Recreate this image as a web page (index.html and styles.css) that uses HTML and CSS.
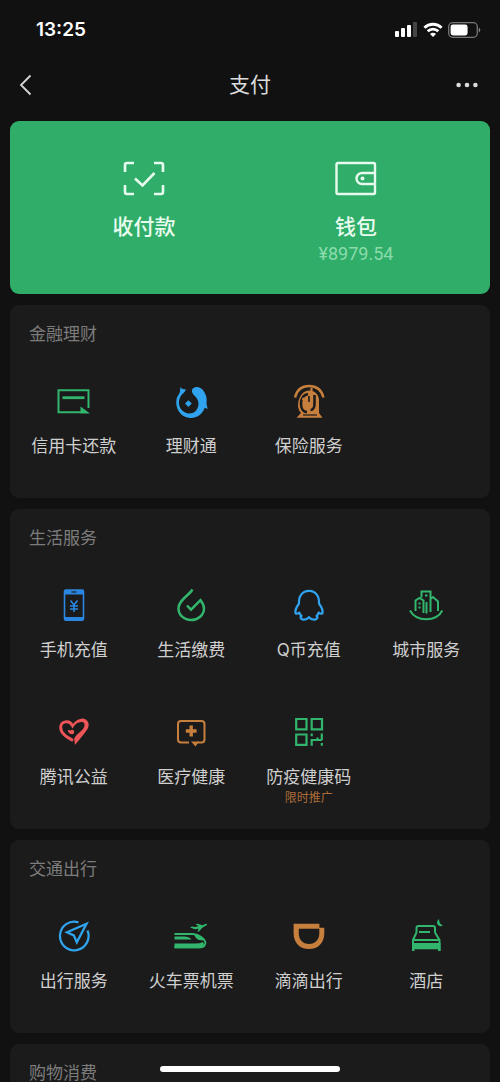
FILE: index.html
```html
<!DOCTYPE html>
<html lang="zh-CN">
<head>
<meta charset="utf-8">
<meta name="viewport" content="width=device-width, initial-scale=1">
<title>支付</title>
<link rel="stylesheet" href="styles.css">
</head>
<body>
<div class="app">
  <div class="status">
    <span class="time">13:25</span>
    <div class="indicators">
      <svg width="23" height="16" viewBox="0 0 23 16"><g fill="#fff"><rect x="0" y="9" width="4" height="6" rx="1"/><rect x="6" y="6" width="4" height="9" rx="1"/><rect x="12" y="3" width="4" height="12" rx="1"/></g><rect x="18" y="0" width="4" height="15" rx="1" fill="#444"/></svg>
      <svg width="20" height="16" viewBox="0 0 20 16"><g fill="none" stroke="#fff" stroke-width="2.8"><path d="M1.4 5.7a12.4 12.4 0 0 1 17.2 0"/><path d="M4.7 9.3a7.6 7.6 0 0 1 10.6 0"/></g><path d="M7 12q3-2.6 6 0l-3 3z" fill="#fff"/></svg>
      <svg width="33" height="16" viewBox="0 0 33 16"><rect x=".7" y=".7" width="28.6" height="14.6" rx="4" fill="none" stroke="#777" stroke-width="1.3"/><rect x="2.6" y="2.6" width="17" height="10.8" rx="2.4" fill="#fff"/><path d="M30.8 5.6q3 2.4 0 4.8z" fill="#888"/></svg>
    </div>
  </div>
  <header class="nav">
    <button class="nav-btn" type="button" aria-label="返回"><svg width="14" height="22" viewBox="0 0 14 22"><path d="M12.500 1.500 3 11l9.500 9.500" fill="none" stroke="#d6d6d6" stroke-width="1.8"/></svg></button>
    <h1>支付</h1>
    <button class="nav-btn nav-more" type="button" aria-label="更多"><svg width="22" height="6" viewBox="0 0 22 6" fill="#dcdcdc"><circle cx="2.600" cy="3" r="2.300"/><circle cx="11" cy="3" r="2.300"/><circle cx="19.400" cy="3" r="2.300"/></svg></button>
  </header>
  <main class="cards">
    <section class="hero">
      <a class="hero-item" href="#">
        <svg width="44" height="36" viewBox="0 0 44 36" fill="none" stroke="#e6fbee" stroke-width="2.600"><path d="M3 12V5q0-2 2-2h7M32 3h7q2 0 2 2v7M41 25v7q0 2-2 2h-7M12 34H5q-2 0-2-2v-7M13 18.500l7.500 7L32.500 13"/></svg>
        <span class="hero-label">收付款</span>
      </a>
      <a class="hero-item" href="#">
        <svg width="44" height="36" viewBox="0 0 44 36"><g fill="none" stroke="#e6fbee" stroke-width="2.400"><rect x="2.500" y="3" width="38.500" height="31" rx="1.500"/><path d="M41 13H28a5.500 5.500 0 0 0 0 11h13"/></g><circle cx="28.500" cy="18.500" r="2" fill="#e6fbee"/></svg>
        <span class="hero-label">钱包</span>
        <span class="balance">¥8979.54</span>
      </a>
    </section>

    <section class="card">
      <h2>金融理财</h2>
      <div class="grid">
        <a class="item" href="#">
          <svg class="icon green" viewBox="0 0 36 36"><path d="M32.500 24V6.300h-30v22H25" fill="none" stroke="currentColor" stroke-width="2"/><path d="M6.500 13.700h22" stroke="currentColor" stroke-width="2.800"/><path d="M24.500 22.500 34 29.500h-9.500z" fill="currentColor"/></svg>
          <span>信用卡还款</span>
        </a>
        <a class="item" href="#">
          <svg class="icon sky" viewBox="0 0 36 36" fill="currentColor"><path d="M7.500 3q1.500 3 5.500 2-1 3.500-4 5.500C5.500 14.500 5 20 7.500 24.500 12 31 20 31 23.500 26c3.500-5 2-10.500-1.200-13.500-2.800-2.500-4.500-5.500-2.500-8 3-3 8-1.500 10.500 2 2.800 3.800 4 8 3.200 13.500l1.200 5-3-1.200C29 31 23 34.500 17 34 7 33 2 24 3.500 15.500 4 12 7 9.500 7 7z"/><path d="m15.400 16.200 3.400 3.400-3.400 3.400-3.400-3.400z"/></svg>
          <span>理财通</span>
        </a>
        <a class="item" href="#">
          <svg class="icon orange" viewBox="0 0 36 36" fill="none" stroke="currentColor"><path d="M4 13.500C6 5.500 11 2 18 2s12.500 3.500 14.500 11.500" stroke-width="2.400"/><path d="M9 13Q12 6.500 18 6.500c6 0 9.500 4 10 9V29l3.500 4.700H5.500L10 29C6.500 25 6 19 9 13z" fill="currentColor" stroke="none"/><path d="M17 10c-5 1-7 5-7 10 0 4 2 8 6 8M23.500 11v9c0 4-2 6-4 6" stroke="#1b1b1b" stroke-width="2.600"/><path d="M12 31h14" stroke="#1b1b1b" stroke-width="1.200"/><path d="M20.500 4v17" stroke-width="2.200"/><path d="M18 12v6" stroke="#1b1b1b" stroke-width="1.600"/><circle cx="12.500" cy="15" r="1.500" fill="currentColor" stroke="none"/></svg>
          <span>保险服务</span>
        </a>
      </div>
    </section>

    <section class="card">
      <h2>生活服务</h2>
      <div class="grid">
        <a class="item" href="#">
          <svg class="icon blue" viewBox="0 0 36 36" fill="currentColor"><path fill-rule="evenodd" d="M10 1.200h16q2.300 0 2.300 2.300v27.200q0 2.300-2.300 2.300H10q-2.300 0-2.300-2.300V3.500q0-2.300 2.300-2.300zM9.300 6.500V29h17.400V6.500z"/><path d="M15.500 4h5" stroke="#1b1b1b" stroke-width="1.200"/><path d="M14.500 12.500 18 17l3.500-4.500M18 17v7M14 18h8M14 21h8" fill="none" stroke="currentColor" stroke-width="1.600"/></svg>
          <span>手机充值</span>
        </a>
        <a class="item" href="#">
          <svg class="icon green" viewBox="0 0 36 36" fill="none" stroke="currentColor" stroke-width="2.500"><path d="M19.500 1.500C15 8.500 5.500 12 5.500 20.500 5.500 27 11 32 18.200 32 25 32 31 27 31 20.500c0-3.500-1.300-5.500-3.500-8.300L18 21.700l-4-4.200"/></svg>
          <span>生活缴费</span>
        </a>
        <a class="item" href="#">
          <svg class="icon sky" viewBox="0 0 36 36" fill="none" stroke="currentColor" stroke-width="2.200" stroke-linejoin="round"><path d="M8 15.500C7.500 8 11.500 2.800 18 2.800S28.500 8 28 15.500c2.500 3.500 4.200 7 3.500 9.800-1.200.7-2.700.3-3.800-.8-.4 1.500-1.200 2.500-2.200 3.500 1.800 1.300 1 3-1.500 3.600-2.500.4-4.500-.6-6-2.400-1.500 1.800-3.500 2.800-6 2.400-2.500-.6-3.300-2.300-1.500-3.600-1-1-1.800-2-2.200-3.500-1.100 1.100-2.600 1.500-3.800.8-.7-2.800 1-6.300 3.500-9.800z"/></svg>
          <span>Q币充值</span>
        </a>
        <a class="item" href="#">
          <svg class="icon green" viewBox="0 0 36 36" fill="none" stroke="currentColor" stroke-width="2"><path d="M2 22.500C5 28 11 31.200 18.200 31.200S31.500 28 34.300 22.500M7.500 23V12.500l4-2.500 4 2.500V25M13.500 9.500V3.500h9V24M18.500 14v11.500M22.500 11l2.500-2 5 4.500V23"/><path d="M10.500 15.500h2M10.500 19.500h2M17 7.500h2.500"/></svg>
          <span>城市服务</span>
        </a>
        <a class="item" href="#">
          <svg class="icon red" viewBox="0 0 36 36" fill="none" stroke="currentColor"><path d="M17 25.500C10.500 22 4.700 18.500 4.700 12.500 4.700 6 13.500 4.500 16.500 11" stroke-width="2.900"/><path d="M15.500 12C17.500 7 22 3.500 27 3.500c5 .8 7.300 6 4.500 10.500C28.500 18.500 23 25 19 30l-.8-6C19.500 20 24 17.500 27 14c2.300-3 2.200-6.500-.8-7-3.700-.5-7.200 1.500-9.700 6.500z" fill="currentColor" stroke="none"/><path d="M12.500 15q.5 3 3.500 3" stroke-width="1.600"/><circle cx="16" cy="17" r="2.200" fill="currentColor" stroke="none"/></svg>
          <span>腾讯公益</span>
        </a>
        <a class="item" href="#">
          <svg class="icon orange" viewBox="0 0 36 36" fill="none" stroke="currentColor"><path d="M16 27.500H8q-3 0-3-3V9q0-3 3-3h20.500q3 0 3 3v15.500q0 3-3 3H24" stroke-width="2"/><path d="M18 26.500h8l-3.500 5z" fill="currentColor" stroke="none"/><path d="M12.800 16h10.800M18.200 10.600v10.800" stroke-width="3.400"/></svg>
          <span>医疗健康</span>
        </a>
        <a class="item" href="#">
          <svg class="icon green" viewBox="0 0 36 36" fill="none" stroke="currentColor" stroke-width="2.200"><path d="M5.200 4h10.300v10.300H5.200zM20.700 4H31v10.300H20.700zM5.200 19.500h10.300v10.300H5.200z"/><path d="M20.700 18.500v2.800M20.700 30.800V25H31M30.800 18.500V25M30.800 28v2.800M26.500 22.500V25"/></svg>
          <span>防疫健康码</span>
          <small>限时推广</small>
        </a>
      </div>
    </section>

    <section class="card">
      <h2>交通出行</h2>
      <div class="grid">
        <a class="item" href="#">
          <svg class="icon sky" viewBox="0 0 36 36" fill="none" stroke="currentColor" stroke-width="2.300"><path d="M22.500 3.300A14.300 14.300 0 1 0 31.500 11.500"/><path d="M30.500 4.800 11 13.200l6.800 3.200 3 7z"/></svg>
          <span>出行服务</span>
        </a>
        <a class="item" href="#">
          <svg class="icon green" viewBox="0 0 36 36" fill="currentColor"><path d="M17 8.200l2-.7 3 .6 3.500-.8-3-2.300 2-.3 5 1.600 3.500-1.500q2 .2.500 1.500L29 9l-3 3.500-1.500.3 1-3-4 .5z"/><path d="M1.500 15H20c6 .5 11 4 12.300 8 .8 3.500-2 5.200-5.300 5.200H1.500" fill="none" stroke="currentColor" stroke-width="1.900"/><path d="M1.500 17.500H12q5 .5 6.500 3H1.500zM20.500 15q7 .5 11 6.500-7 0-8.500-2.500zM1.500 24.500H22q5 0 8-1.500 3 4.500-3 6.200H1.500z"/></svg>
          <span>火车票机票</span>
        </a>
        <a class="item" href="#">
          <svg class="icon orange" viewBox="0 0 36 36" fill="currentColor"><path d="M2.600 4.700h25.800v5H7.800v4.500c0 6.500 4 10.800 10.200 10.800s10.300-4.300 10.300-10.800V8.700h5v5.500C33.300 24 27 30 18 30S2.600 24 2.600 14.200z"/></svg>
          <span>滴滴出行</span>
        </a>
        <a class="item" href="#">
          <svg class="icon green" viewBox="0 0 36 36" fill="none" stroke="currentColor" stroke-width="2"><path d="M8.500 13.500V9q0-2 2-2h14.500q2 0 2 2v4.500M11 13h11M8.500 13.500 5 21v11M27 13.500 31.500 21v11M6 21h25"/><path d="M4 24h28.500v8H30v-1.800H6.500V32H4z" fill="currentColor" stroke="none"/><path d="M31 0q-3 2.500-1.500 5.500 2 3 5.500 1-4-1.500-4-6.500z" fill="currentColor" stroke="none"/></svg>
          <span>酒店</span>
        </a>
      </div>
    </section>

    <section class="card">
      <h2>购物消费</h2>
    </section>
  </main>
  <div class="home-bar"></div>
</div>
</body>
</html>
```
FILE: styles.css
```css
* {
  box-sizing: border-box;
}

body {
  margin: 0;
  background: #111;
  color: #cfcfcf;
  font-family: Inter, "Noto Sans CJK SC", sans-serif;
}

a {
  color: inherit;
  text-decoration: none;
}

.app {
  height: 100vh;
  overflow: hidden;
}

.status {
  display: flex;
  align-items: center;
  justify-content: space-between;
  height: 60px;
  padding: 0 19px 0 36px;
}

.time {
  color: #fff;
  font: 600 19px/24px Inter, sans-serif;
}

.indicators {
  display: flex;
  align-items: center;
  gap: 5px;
}

.nav {
  display: flex;
  align-items: center;
  justify-content: space-between;
  height: 50px;
  padding: 0 12px;
}

.nav-btn {
  display: flex;
  align-items: center;
  justify-content: flex-start;
  width: 44px;
  height: 44px;
  padding: 0 6px;
  border: 0;
  background: none;
}

.nav-more {
  justify-content: flex-end;
  padding: 0 10px;
}

h1 {
  margin: 0;
  color: #dcdcdc;
  font-size: 21px;
  font-weight: 400;
  line-height: 30px;
}

.cards {
  display: flex;
  flex-direction: column;
  gap: 11px;
  padding: 11px 10px;
}

.hero {
  display: grid;
  grid-template-columns: 1fr 1fr;
  padding: 39px 28px 28px;
  border-radius: 9px;
  background: #2fad69;
}

.hero-item {
  display: flex;
  flex-direction: column;
  align-items: center;
}

.hero-label {
  margin-top: 16px;
  color: #e9fcf0;
  font-size: 21px;
  font-weight: 500;
  line-height: 30px;
}

.balance {
  color: #8bdcac;
  font: 400 18px/24px Roboto, sans-serif;
}

.card {
  padding: 17px 5px 22px;
  border-radius: 9px;
  background: #1b1b1b;
}

h2 {
  margin: 0;
  padding-left: 14px;
  color: #7c7c7c;
  font-size: 17px;
  font-weight: 400;
  line-height: 24px;
}

.grid {
  display: grid;
  grid-template-columns: repeat(4, 1fr);
  row-gap: 35px;
  padding-top: 38px;
}

.item {
  display: flex;
  flex-direction: column;
  align-items: center;
  min-height: 92px;
  font-size: 17px;
  line-height: 24px;
  white-space: nowrap;
}

.icon {
  width: 36px;
  height: 36px;
  margin-bottom: 14px;
}

.item small {
  color: #ad6c39;
  font-size: 12px;
  line-height: 18px;
}

.green {
  color: #32b56c;
}

.sky {
  color: #2fa3ee;
}

.blue {
  color: #2b86e2;
}

.orange {
  color: #c67f3d;
}

.red {
  color: #ee5558;
}

.home-bar {
  position: fixed;
  bottom: 10px;
  left: 50%;
  width: 36%;
  height: 6px;
  margin-left: -18%;
  border-radius: 3px;
  background: #fff;
}
```
